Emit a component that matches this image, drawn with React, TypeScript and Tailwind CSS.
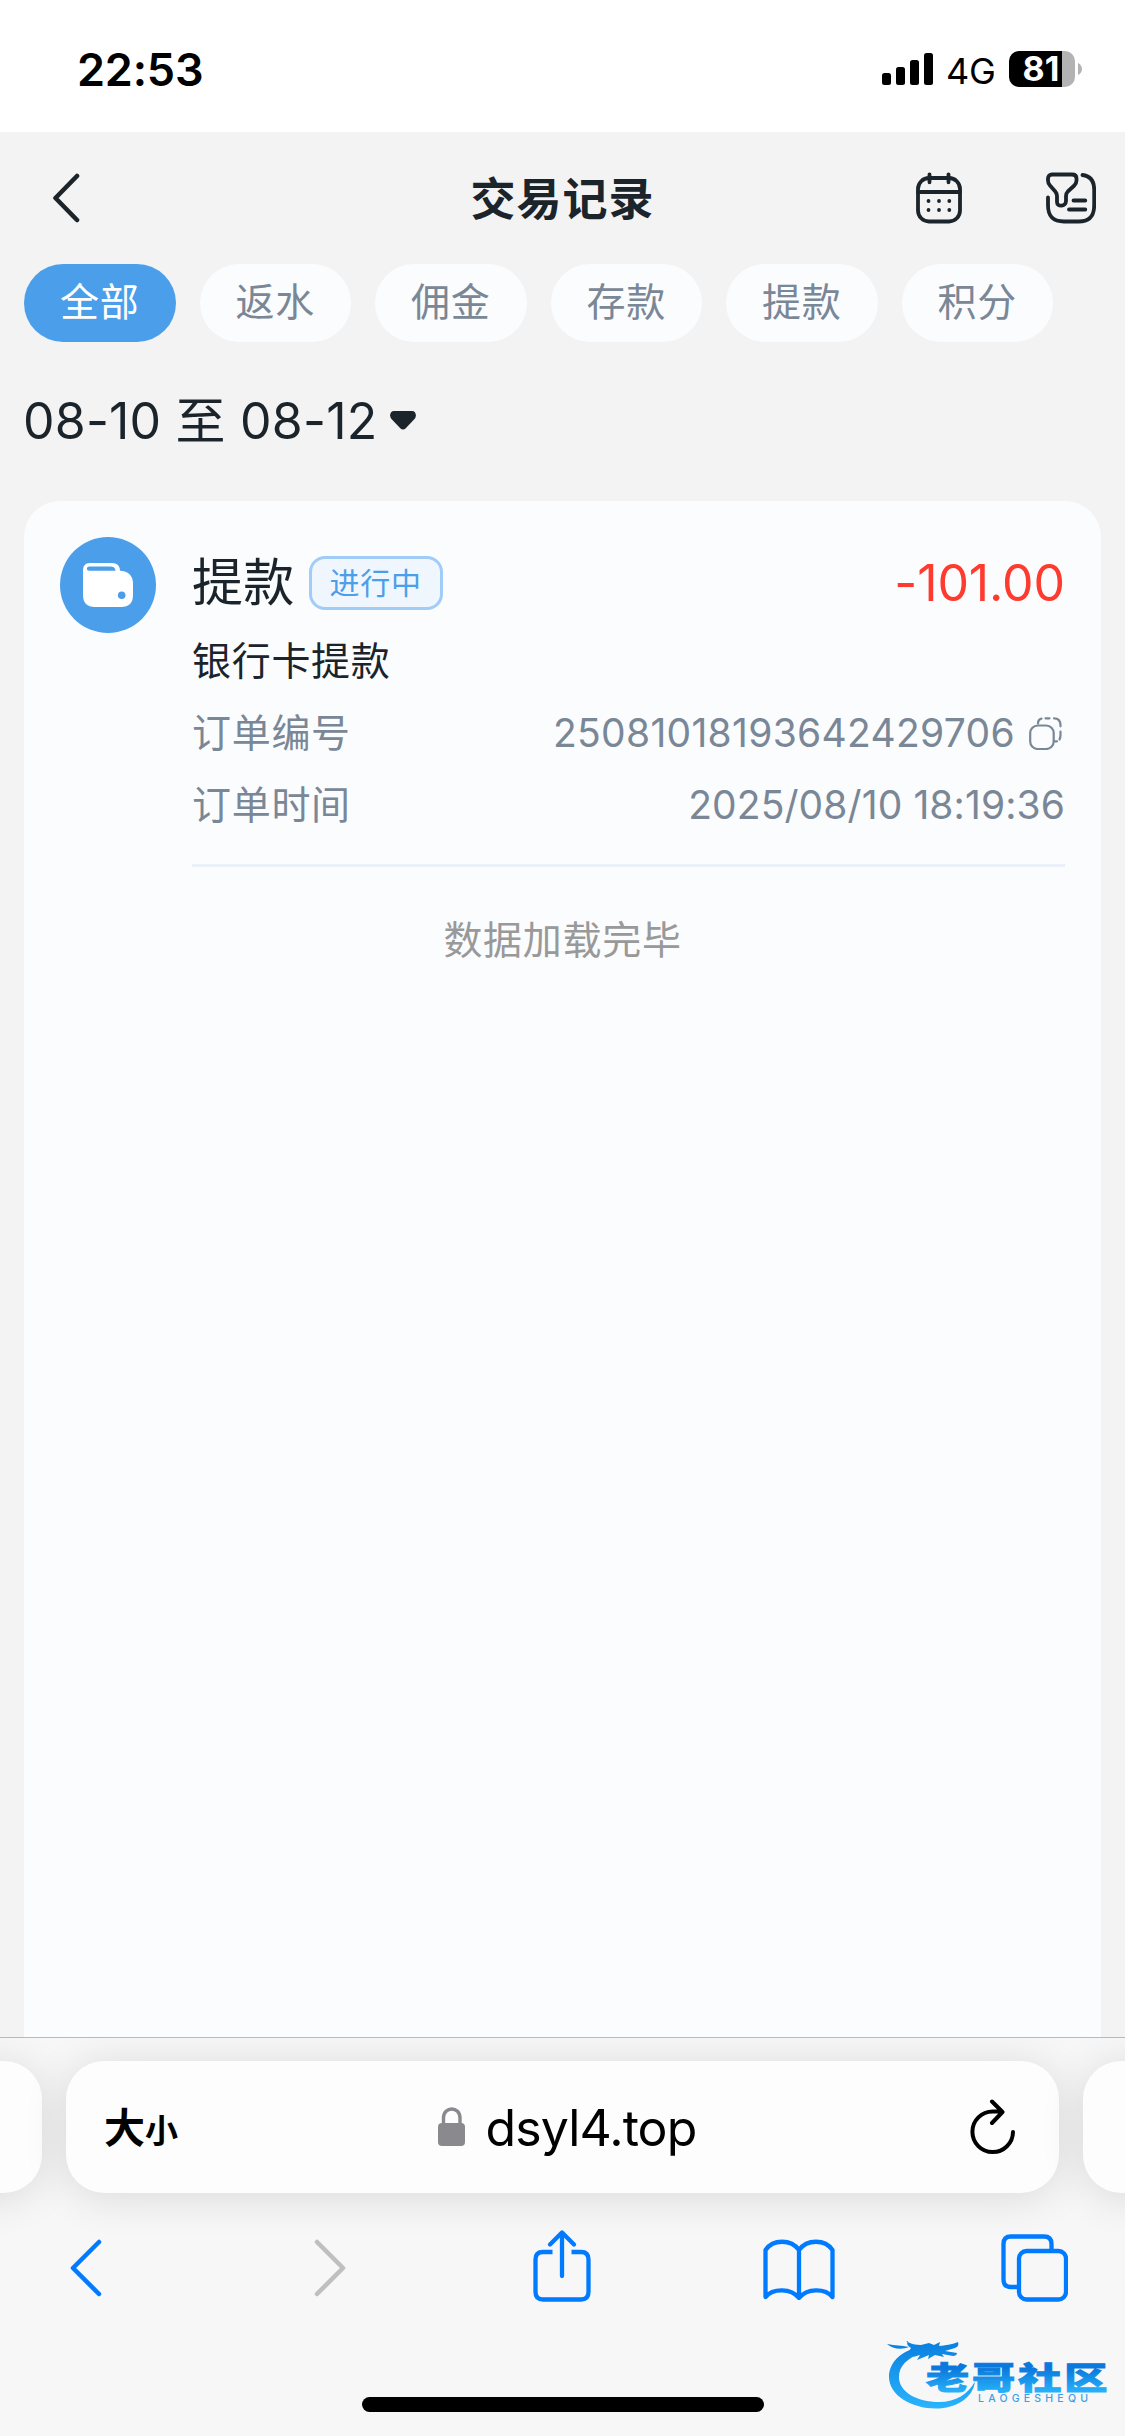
import React, { useState } from 'react';

const TABS = ['全部', '返水', '佣金', '存款', '提款', '积分'];

const StatusBar: React.FC = () => (
  <div className="h-[132px] shrink-0 bg-white flex items-center justify-between pl-[77px] pr-[43px]">
    <span className="text-[45px] leading-none font-semibold text-black tracking-[-0.2px] mt-[6px]">22:53</span>
    <div className="flex items-center mt-[6px]">
      <svg width="52" height="33" viewBox="0 0 52 33" className="mr-[12px]">
        <rect x="0" y="20" width="9" height="12" rx="2.5" />
        <rect x="14" y="14" width="9" height="18" rx="2.5" />
        <rect x="28" y="7" width="9" height="25" rx="2.5" />
        <rect x="42" y="0" width="9" height="32" rx="2.5" />
      </svg>
      <span className="w-[63px] text-[36px] leading-none tracking-[-0.3px] text-black mt-[3px]">4G</span>
      <div className="w-[66px] h-[36px] rounded-[10px] bg-[linear-gradient(to_right,#000_53px,#b3b3b3_53px)] flex items-center justify-center pr-[2px]">
        <span className="text-[34px] leading-none font-bold text-white">81</span>
      </div>
      <svg width="7" height="14" viewBox="0 0 7 14">
        <path d="M3 1c2.5 1 4 3.5 4 6s-1.500 5-4 6z" fill="#b3b3b3" />
      </svg>
    </div>
  </div>
);

const CalendarIcon = () => (
  <svg width="46" height="52" viewBox="0 0 46 52" fill="none" stroke="#1b242b" strokeWidth="3.8" strokeLinecap="round">
    <rect x="2" y="6" width="42" height="43.5" rx="11" />
    <path d="M2 20h42M13.500 2.300v8M32.500 2.300v8" />
    <path d="M12.500 29h.01M23 29h.01M33.300 29h.01M12.500 38h.01M23 38h.01M33.300 38h.01" />
  </svg>
);

const FilterIcon = () => (
  <svg width="50" height="52" viewBox="0 0 50 52" fill="none" stroke="#1b242b" strokeWidth="3.8" strokeLinecap="round" strokeLinejoin="round">
    <path d="M6 2.500h20c3 0 4.500 1.500 4.500 4v2c0 2-.8 3.500-2.200 5l-6.500 6c-1.300 1.300-1.800 2.500-1.800 4.500v5c0 5.500-9 6.500-9 1v-6c0-2-.5-3-1.700-4.500L4 13.500C2.600 12 2 10.500 2 8.500v-2c0-2.500 1.500-4 4-4z" />
    <path d="M36.500 3C45 4 48.200 9 48.200 18v15c0 11-4.500 16.500-15.500 16.500H18C6.500 49.500 2 44 2 33v-7.500" />
    <path d="M27.500 28.500h11.800M23 37.500h16.300" />
  </svg>
);

const WalletIcon = () => (
  <svg width="50" height="44" viewBox="0 0 50 44" className="mt-[-1px]">
    <path d="M7 0h22c5 0 8 3 8 7.800C45 8 50 13 50 20v12c0 8-4 12-12 12H12C4 44 0 40 0 32V8c0-5 2-8 7-8z" fill="#fff" />
    <path d="M6.500 3.500H27c3.500 0 5.500 1.500 5.500 4.300h-26c-3.500 0-3.500-4.300 0-4.300z" fill="#4b9fea" />
    <circle cx="38.7" cy="32.3" r="3.8" fill="#4b9fea" />
  </svg>
);

const CopyIcon = () => (
  <svg width="33" height="33" viewBox="0 0 33 33" fill="none" stroke="#798796" strokeWidth="2.2" strokeLinecap="round">
    <rect x="1.2" y="8.5" width="23.5" height="23.5" rx="7.5" />
    <path d="M9 6.500C9 4 10 2.200 12.500 1.600M16.500 1.300h4M25 1.300c4 0 6.500 2.500 6.500 7v1M31.500 14.500v3.500c0 2-.3 3-1 4.500M25 24.300h3" />
  </svg>
);

const TransactionCard: React.FC = () => (
  <div className="flex px-9 pt-9">
    <div className="w-24 h-24 shrink-0 rounded-full bg-[#4b9fea] flex items-center justify-center">
      <WalletIcon />
    </div>
    <div className="ml-9 flex-1 border-b-[3px] border-[#e9f0f7] text-[39px] tracking-[0.7px] text-[#798796]">
      <div className="h-[88px] pt-[4px] flex items-center text-[#1b242b]">
        <span className="text-[51px] tracking-[0.3px]">提款</span>
        <span className="ml-[14px] h-[54px] w-[134px] flex items-center justify-center rounded-[16px] border-[3px] border-[#a0ccf7] bg-[#f0f6fe] text-[30px] text-[#4b9fea]">
          进行中
        </span>
        <span className="ml-auto text-[50px] tracking-[-0.1px] text-[#ff3b30]">-101.00</span>
      </div>
      <div className="h-[72px] flex items-center text-[#1b242b]">银行卡提款</div>
      <div className="h-[72px] flex items-center justify-between">
        <span>订单编号</span>
        <div className="flex items-center gap-[14px] pr-[3px] tracking-[0.3px]">
          <span>25081018193642429706</span>
          <CopyIcon />
        </div>
      </div>
      <div className="h-[72px] mb-[23px] flex items-center justify-between">
        <span>订单时间</span>
        <span className="tracking-[0.1px]">2025/08/10 18:19:36</span>
      </div>
    </div>
  </div>
);

const Watermark = () => (
  <svg width="224" height="80" viewBox="0 0 224 80" className="absolute right-[15px] bottom-[22px]">
    <defs>
      <linearGradient id="ring" gradientUnits="userSpaceOnUse" x1="0" y1="8" x2="0" y2="76">
        <stop offset="0" stopColor="#0a7fe0" />
        <stop offset="1" stopColor="#2ab6fd" />
      </linearGradient>
      <linearGradient id="title" x1="0" y1="0" x2="0" y2="1">
        <stop offset="0.25" stopColor="#0a78dc" />
        <stop offset="0.95" stopColor="#2ab6fd" />
      </linearGradient>
    </defs>
    <g fill="url(#ring)">
      <path d="M30 14C14 18 3 29 3 43c0 18 22 31.500 47 31.500 20 0 37-10.500 39-27C82 60 70 68 53 68c-22 0-40-10-40-25 0-11 8-19 23-24z" />
      <path d="M1 10c9 2 14 1 22 3-7 3-17 2-22-3z" />
      <path d="M20 7c5 3 10 4 15 4l8-2 5 2 6-3-1 4c7-1 12-1 19-4 1 3 0 5-3 6l-10 3 12 2c0 2-2 3-4 3l-11-2 2 3-9-2-7 4 1-4-12 5 3-5-7 2 4-5-8-1 2-3c-3-2-5-4-3-7z" />
    </g>
    <g transform="translate(40 54.5) scale(1.08 0.76)">
      <text fontSize="40" fontWeight="900" textLength="168" fill="url(#title)" stroke="url(#title)" strokeWidth="1.2">老哥社区</text>
    </g>
    <text x="92" y="68" fontSize="10.5" fontWeight="500" textLength="110" fill="#3b9fe6">LAOGESHEQU</text>
  </svg>
);

const BrowserBar: React.FC = () => (
  <div className="relative h-[399px] shrink-0 overflow-hidden bg-[#f7f7f7] border-t border-[#b9b9bb]">
    <div className="mt-[23px] -mx-[951px] flex justify-center gap-6">
      <div className="h-[132px] w-[993px] shrink-0 rounded-[38px] bg-[#fdfdfd] shadow-[0_4px_44px_rgba(0,0,0,0.12)]" />
      <div className="h-[132px] w-[993px] shrink-0 rounded-[38px] bg-[#fdfdfd] shadow-[0_4px_44px_rgba(0,0,0,0.12)] flex items-center pl-[38px] pr-[43px] text-black">
        <div className="flex items-baseline font-bold leading-none mt-[2px]">
          <span className="text-[41px]">大</span>
          <span className="text-[33px]">小</span>
        </div>
        <svg width="28" height="40" viewBox="0 0 28 40" className="ml-auto mr-[20px]">
          <rect x="0" y="16" width="27" height="23" rx="4" fill="#8a8a8e" />
          <path d="M5.500 18v-7c0-12 16.500-12 16.500 0v7" fill="none" stroke="#8a8a8e" strokeWidth="3.4" />
        </svg>
        <span className="text-[50px] leading-none tracking-[-0.9px] mr-[14px] mt-[2px]">dsyl4.top</span>
        <svg width="46" height="56" viewBox="0 0 46 56" className="ml-auto" fill="none" stroke="#000" strokeWidth="4" strokeLinecap="round" strokeLinejoin="round">
          <path d="M43 33a20.300 20.300 0 1 1-20.300-20.500H32M22 2.500l10.500 10.500L22 24" />
        </svg>
      </div>
      <div className="h-[132px] w-[993px] shrink-0 rounded-[38px] bg-[#fdfdfd] shadow-[0_4px_44px_rgba(0,0,0,0.12)]" />
    </div>

    {/* Toolbar */}
    <div className="mt-[36px] -mx-7 h-[76px] grid grid-cols-5 items-center justify-items-center text-[#007aff]">
      <svg width="34" height="58" viewBox="0 0 34 58" className="mr-[8px]" fill="none" stroke="currentColor" strokeWidth="4.5" strokeLinecap="round" strokeLinejoin="round">
        <path d="M30 3L4 29l26 26" />
      </svg>
      <svg width="34" height="58" viewBox="0 0 34 58" className="ml-[8px]" fill="none" stroke="#bfbfbf" strokeWidth="4.5" strokeLinecap="round" strokeLinejoin="round">
        <path d="M4 3l26 26L4 55" />
      </svg>
      <svg width="58" height="74" viewBox="0 0 58 74" className="mb-[4px]" fill="none" stroke="currentColor" strokeWidth="4.3">
        <path d="M19.500 23H10c-5 0-7.500 2.500-7.500 7.500V63c0 5 2.500 7.500 7.500 7.500h38c5 0 7.500-2.500 7.500-7.500V30.500c0-5-2.500-7.500-7.500-7.500h-9.500" />
        <path d="M29 47V4M17 15.500L29 3.500l12 12" strokeLinecap="round" strokeLinejoin="round" />
      </svg>
      <svg width="72" height="62" viewBox="0 0 72 62" className="mt-[2px]" fill="none" stroke="currentColor" strokeWidth="4.3" strokeLinejoin="round">
        <path d="M36 12C28 1 10 1 2.500 12v47C10 50 28 50 36 60c8-10 26-10 33.500-1V12C62 1 44 1 36 12zM36 12v48" />
      </svg>
      <svg width="67" height="68" viewBox="0 0 67 68" fill="none" stroke="currentColor" strokeWidth="4.3">
        <path d="M18 53h-8c-5 0-7.500-2.500-7.500-7.500V10c0-5 2.500-7.500 7.500-7.500h33c5 0 7.500 2.500 7.500 7.500v7" />
        <rect x="18" y="17" width="47" height="48.5" rx="7.5" />
      </svg>
    </div>
    <div className="mx-auto mt-[92px] h-[15px] w-[402px] rounded-full bg-black" />
    <Watermark />
  </div>
);

const App: React.FC = () => {
  const [active, setActive] = useState(0);

  return (
    <div className="w-[1125px] h-[2436px] flex flex-col overflow-hidden bg-[#f3f3f3] font-[Inter,'Noto_Sans_CJK_SC',sans-serif]">
      <StatusBar />

      {/* Header */}
      <div className="h-[132px] shrink-0 grid grid-cols-3 items-center px-[29px]">
        <svg width="28" height="50" viewBox="0 0 28 50" className="ml-[23px]" fill="none" stroke="#1b242b" strokeWidth="4.6" strokeLinecap="round" strokeLinejoin="round">
          <path d="M25 3L3.500 25 25 47" />
        </svg>
        <h1 className="text-center text-[45px] leading-none font-bold tracking-[1px] text-[#1b242b] pt-[2px]">交易记录</h1>
        <div className="flex justify-end gap-[84px]">
          <CalendarIcon />
          <FilterIcon />
        </div>
      </div>

      {/* Tabs */}
      <div className="flex shrink-0 gap-6 px-6">
        {TABS.map((tab, i) => (
          <button
            key={tab}
            onClick={() => setActive(i)}
            className={`h-[78px] w-[151.5px] shrink-0 rounded-full pb-[4px] text-[39px] leading-none tracking-[0.7px] ${
              i === active ? 'bg-[#4b9fea] text-white' : 'bg-[#fbfcfe] text-[#798796]'
            }`}
          >
            {tab}
          </button>
        ))}
      </div>

      {/* Date range */}
      <div className="h-[159px] shrink-0 flex items-center pl-[23px] text-[50px] tracking-[0.2px] text-[#1b242b]">
        <span>08-10 至 08-12</span>
        <svg width="26" height="19" viewBox="0 0 26 19" className="ml-[13px] mb-[2px]" fill="#1b242b">
          <path d="M4 0h18c4 0 5 5 2.500 8L16 17c-2 2-4 2-6 0L1.500 8C-1 5 0 0 4 0z" />
        </svg>
      </div>

      <div className="flex-1 mx-6 rounded-t-[36px] bg-[#fbfcfe]">
        <TransactionCard />
        <p className="mt-[44px] text-center text-[39px] tracking-[0.7px] text-[#999]">数据加载完毕</p>
      </div>

      <BrowserBar />
    </div>
  );
};

export default App;
